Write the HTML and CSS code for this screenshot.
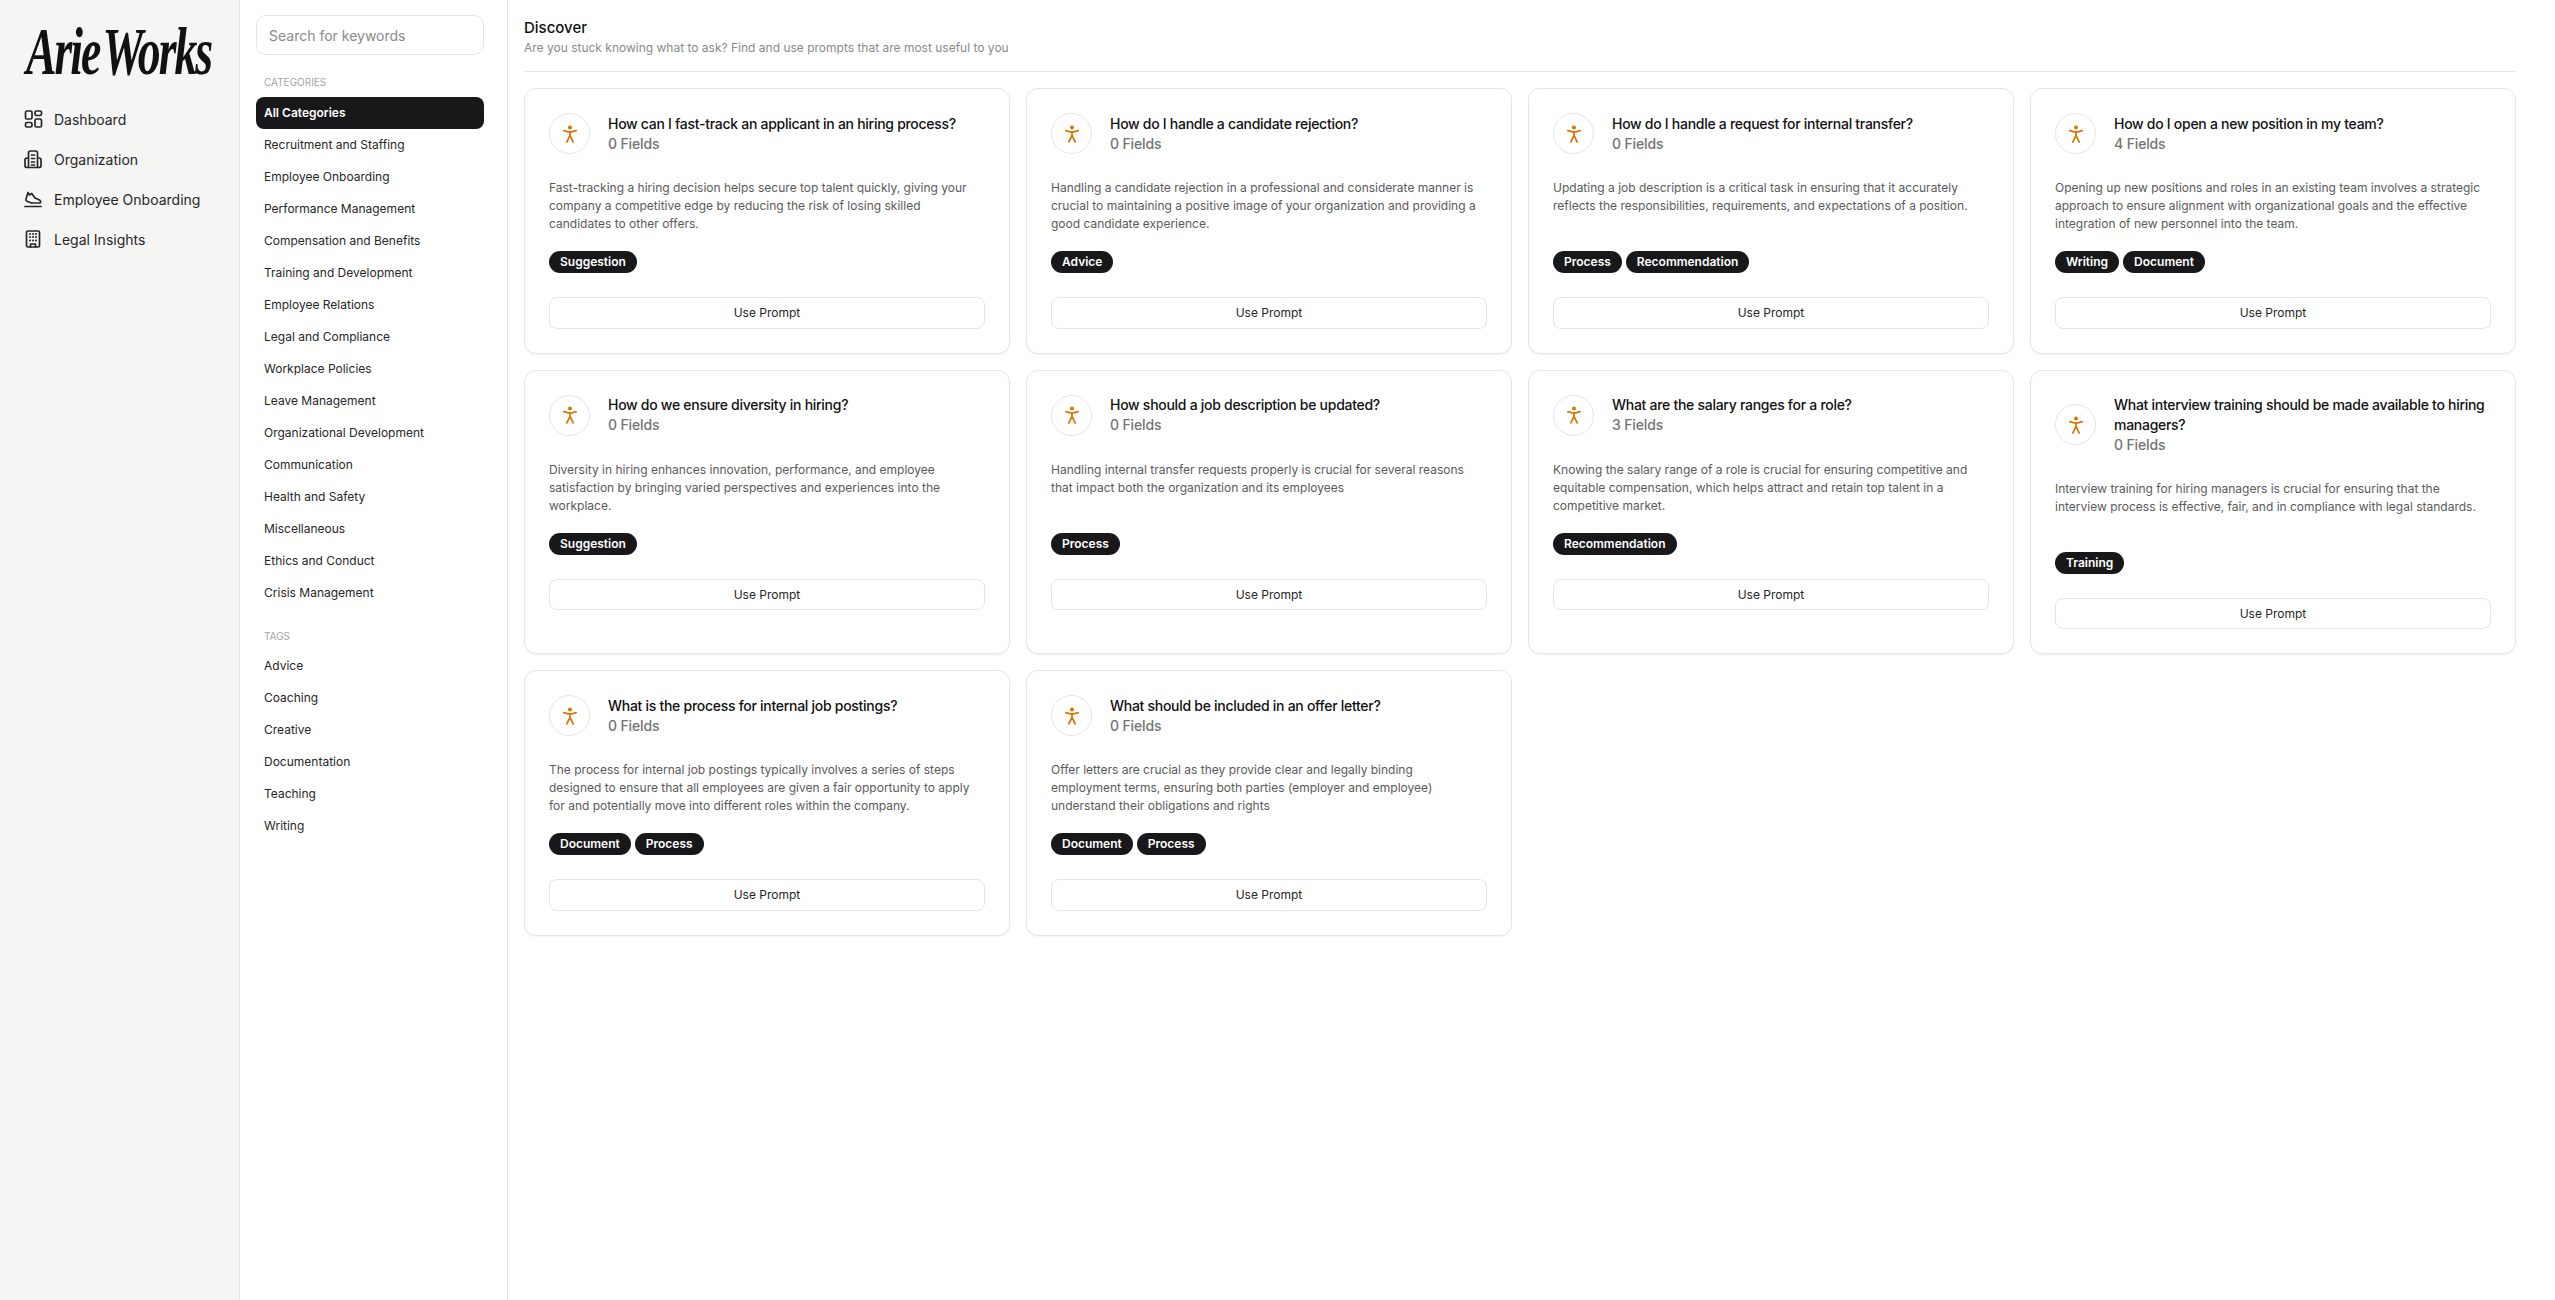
FILE: index.html
```html
<!DOCTYPE html>
<html lang="en">
<head>
    <meta charset="UTF-8">
    <meta name="viewport" content="width=device-width, initial-scale=1.0">
    <title>Arie Works - Discover</title>
    <link rel="stylesheet" href="styles.css">
</head>
<body>
    <svg class="icon-defs" width="0" height="0">
        <symbol id="person" viewBox="0 0 16 20">
            <circle cx="8" cy="2.6" r="2.3" fill="currentColor"/>
            <path d="M1 6.2 L6 7.6 H10 L15 6.2 M8 7.6 V11.6 M8 11.6 L4.4 19 M8 11.6 L11.6 19" fill="none" stroke="currentColor" stroke-width="2" stroke-linecap="round" stroke-linejoin="round"/>
        </symbol>
    </svg>
    <div class="app">
        <aside class="sidebar">
            <div class="logo"><span class="logo-text">Arie Works</span></div>
            <nav class="nav">
                <a class="nav-item">
                    <svg viewBox="0 0 24 24"><rect x="4.5" y="4" width="6.5" height="8" rx="1.5"/><rect x="4.5" y="15.5" width="6.5" height="4.5" rx="1.5"/><rect x="14" y="12" width="6.5" height="8" rx="1.5"/><rect x="14" y="4" width="6.5" height="4.5" rx="1.5"/></svg>
                    Dashboard
                </a>
                <a class="nav-item">
                    <svg viewBox="0 0 24 24"><path d="M7.5 20.5V6a2 2 0 0 1 2-2h5a2 2 0 0 1 2 2v14.5M7.5 11H6a2 2 0 0 0-2 2v5.500a2 2 0 0 0 2 2h12a2 2 0 0 0 2-2V13a2 2 0 0 0-2-2h-1.500M10.500 8h3M10.500 11.500h3M10.500 15h3M10.500 18h3"/></svg>
                    Organization
                </a>
                <a class="nav-item">
                    <svg viewBox="0 0 24 24"><path d="M4 19.500h16M7 5.500 5 12c-.3 1 .2 1.800 1 2.200l3 1.300c1 .4 2 .5 3 .5h6.500c1 0 1.500-.7 1.200-1.500-.4-1.200-1.400-1.900-2.700-2.200L14 11 10.800 6.500 8.500 8 7 5.500z"/></svg>
                    Employee Onboarding
                </a>
                <a class="nav-item">
                    <svg viewBox="0 0 24 24"><rect x="5.500" y="4" width="13" height="16" rx="1.500"/><path d="M9.500 20v-3h5v3"/><path class="dots" d="M9 7h.01M12 7h.01M15 7h.01M9 10h.01M12 10h.01M15 10h.01M9 13.500h.01M12 13.500h.01M15 13.500h.01"/></svg>
                    Legal Insights
                </a>
            </nav>
        </aside>

        <aside class="filters">
            <input class="search" type="text" placeholder="Search for keywords">
            <h5 class="filter-label">CATEGORIES</h5>
            <ul class="filter-list">
                <li class="active">All Categories</li>
                <li>Recruitment and Staffing</li>
                <li>Employee Onboarding</li>
                <li>Performance Management</li>
                <li>Compensation and Benefits</li>
                <li>Training and Development</li>
                <li>Employee Relations</li>
                <li>Legal and Compliance</li>
                <li>Workplace Policies</li>
                <li>Leave Management</li>
                <li>Organizational Development</li>
                <li>Communication</li>
                <li>Health and Safety</li>
                <li>Miscellaneous</li>
                <li>Ethics and Conduct</li>
                <li>Crisis Management</li>
            </ul>
            <h5 class="filter-label tags-label">TAGS</h5>
            <ul class="filter-list">
                <li>Advice</li>
                <li>Coaching</li>
                <li>Creative</li>
                <li>Documentation</li>
                <li>Teaching</li>
                <li>Writing</li>
            </ul>
        </aside>

        <main class="main">
            <header class="page-head">
                <h1>Discover</h1>
                <p>Are you stuck knowing what to ask? Find and use prompts that are most useful to you</p>
            </header>
            <div class="grid">
                <article class="card">
                    <div class="card-head">
                        <span class="avatar"><svg><use href="#person"/></svg></span>
                        <div><h3>How can I fast-track an applicant in an hiring process?</h3><span class="fields">0 Fields</span></div>
                    </div>
                    <p class="desc">Fast-tracking a hiring decision helps secure top talent quickly, giving your company a competitive edge by reducing the risk of losing skilled candidates to other offers.</p>
                    <div class="tags"><span class="tag">Suggestion</span></div>
                    <button class="use-btn">Use Prompt</button>
                </article>
                <article class="card">
                    <div class="card-head">
                        <span class="avatar"><svg><use href="#person"/></svg></span>
                        <div><h3>How do I handle a candidate rejection?</h3><span class="fields">0 Fields</span></div>
                    </div>
                    <p class="desc">Handling a candidate rejection in a professional and considerate manner is crucial to maintaining a positive image of your organization and providing a good candidate experience.</p>
                    <div class="tags"><span class="tag">Advice</span></div>
                    <button class="use-btn">Use Prompt</button>
                </article>
                <article class="card">
                    <div class="card-head">
                        <span class="avatar"><svg><use href="#person"/></svg></span>
                        <div><h3>How do I handle a request for internal transfer?</h3><span class="fields">0 Fields</span></div>
                    </div>
                    <p class="desc">Updating a job description is a critical task in ensuring that it accurately reflects the responsibilities, requirements, and expectations of a position.</p>
                    <div class="tags"><span class="tag">Process</span><span class="tag">Recommendation</span></div>
                    <button class="use-btn">Use Prompt</button>
                </article>
                <article class="card">
                    <div class="card-head">
                        <span class="avatar"><svg><use href="#person"/></svg></span>
                        <div><h3>How do I open a new position in my team?</h3><span class="fields">4 Fields</span></div>
                    </div>
                    <p class="desc">Opening up new positions and roles in an existing team involves a strategic approach to ensure alignment with organizational goals and the effective integration of new personnel into the team.</p>
                    <div class="tags"><span class="tag">Writing</span><span class="tag">Document</span></div>
                    <button class="use-btn">Use Prompt</button>
                </article>
                <article class="card">
                    <div class="card-head">
                        <span class="avatar"><svg><use href="#person"/></svg></span>
                        <div><h3>How do we ensure diversity in hiring?</h3><span class="fields">0 Fields</span></div>
                    </div>
                    <p class="desc">Diversity in hiring enhances innovation, performance, and employee satisfaction by bringing varied perspectives and experiences into the workplace.</p>
                    <div class="tags"><span class="tag">Suggestion</span></div>
                    <button class="use-btn">Use Prompt</button>
                </article>
                <article class="card">
                    <div class="card-head">
                        <span class="avatar"><svg><use href="#person"/></svg></span>
                        <div><h3>How should a job description be updated?</h3><span class="fields">0 Fields</span></div>
                    </div>
                    <p class="desc">Handling internal transfer requests properly is crucial for several reasons that impact both the organization and its employees</p>
                    <div class="tags"><span class="tag">Process</span></div>
                    <button class="use-btn">Use Prompt</button>
                </article>
                <article class="card">
                    <div class="card-head">
                        <span class="avatar"><svg><use href="#person"/></svg></span>
                        <div><h3>What are the salary ranges for a role?</h3><span class="fields">3 Fields</span></div>
                    </div>
                    <p class="desc">Knowing the salary range of a role is crucial for ensuring competitive and equitable compensation, which helps attract and retain top talent in a competitive market.</p>
                    <div class="tags"><span class="tag">Recommendation</span></div>
                    <button class="use-btn">Use Prompt</button>
                </article>
                <article class="card">
                    <div class="card-head">
                        <span class="avatar"><svg><use href="#person"/></svg></span>
                        <div><h3>What interview training should be made available to hiring managers?</h3><span class="fields">0 Fields</span></div>
                    </div>
                    <p class="desc">Interview training for hiring managers is crucial for ensuring that the interview process is effective, fair, and in compliance with legal standards.</p>
                    <div class="tags"><span class="tag">Training</span></div>
                    <button class="use-btn">Use Prompt</button>
                </article>
                <article class="card">
                    <div class="card-head">
                        <span class="avatar"><svg><use href="#person"/></svg></span>
                        <div><h3>What is the process for internal job postings?</h3><span class="fields">0 Fields</span></div>
                    </div>
                    <p class="desc">The process for internal job postings typically involves a series of steps designed to ensure that all employees are given a fair opportunity to apply for and potentially move into different roles within the company.</p>
                    <div class="tags"><span class="tag">Document</span><span class="tag">Process</span></div>
                    <button class="use-btn">Use Prompt</button>
                </article>
                <article class="card">
                    <div class="card-head">
                        <span class="avatar"><svg><use href="#person"/></svg></span>
                        <div><h3>What should be included in an offer letter?</h3><span class="fields">0 Fields</span></div>
                    </div>
                    <p class="desc">Offer letters are crucial as they provide clear and legally binding employment terms, ensuring both parties (employer and employee) understand their obligations and rights</p>
                    <div class="tags"><span class="tag">Document</span><span class="tag">Process</span></div>
                    <button class="use-btn">Use Prompt</button>
                </article>
            </div>
        </main>
    </div>
</body>
</html>
```

FILE: styles.css
```css
* {
    box-sizing: border-box;
}
body {
    margin: 0;
    font-family: Inter, "Noto Sans", sans-serif;
    color: #171717;
    background-color: #fff;
}
.icon-defs {
    display: block;
    height: 0;
}
.app {
    display: flex;
    min-height: 100vh;
}

/* left nav */
.sidebar {
    flex: 0 0 240px;
    min-width: 0;
    background-color: #f5f5f4;
    border-right: 1px solid #e5e5e5;
}
.logo {
    height: 99px;
    padding: 17px 0 0 26px;
    overflow: hidden;
}
.logo-text {
    display: block;
    width: 190px;
    font-family: "Liberation Serif", serif;
    font-style: italic;
    font-weight: 700;
    font-size: 68px;
    line-height: 68px;
    letter-spacing: -3px;
    word-spacing: -8px;
    color: #111;
    white-space: nowrap;
    transform: scaleX(0.673);
    transform-origin: left top;
}
.nav-item {
    display: flex;
    align-items: center;
    height: 40px;
    padding-left: 21px;
    gap: 9px;
    font-size: 14px;
    color: #262626;
}
.nav-item svg {
    width: 24px;
    height: 24px;
    fill: none;
    stroke: #262626;
    stroke-width: 1.7;
    stroke-linecap: round;
    stroke-linejoin: round;
}
.nav-item svg .dots {
    stroke-width: 2;
}

/* filter column */
.filters {
    flex: 0 0 268px;
    min-width: 0;
    padding: 15px 23px 0 16px;
    border-right: 1px solid #e5e5e5;
}
.search {
    display: block;
    width: 100%;
    height: 40px;
    padding: 0 12px;
    border: 1px solid #e5e5e5;
    border-radius: 10px;
    font-family: inherit;
    font-size: 14px;
    outline: none;
}
.search::placeholder {
    color: #8a8a8a;
}
.filter-label {
    margin: 20px 0 0;
    padding-left: 8px;
    height: 22px;
    font-size: 10px;
    line-height: 14px;
    font-weight: 400;
    color: #a3a3a3;
}
.tags-label {
    height: 21px;
}
.filter-list {
    list-style: none;
    margin: 0;
    padding: 0;
}
.filter-list li {
    height: 32px;
    padding-left: 8px;
    border-radius: 8px;
    font-size: 12px;
    line-height: 32px;
    color: #262626;
}
.filter-list li.active {
    background-color: #18181b;
    color: #fff;
    font-weight: 600;
}

/* main */
.main {
    flex: 1;
    min-width: 0;
    padding: 18px 39px 16px 16px;
}
.page-head {
    height: 54px;
    border-bottom: 1px solid #e5e5e5;
}
.page-head h1 {
    margin: 0;
    font-size: 15px;
    line-height: 20px;
    font-weight: 500;
    color: #111;
}
.page-head p {
    margin: 0;
    font-size: 12px;
    line-height: 20px;
    color: #8a8a8a;
}
.grid {
    display: grid;
    grid-template-columns: repeat(4, 1fr);
    gap: 16px;
    margin-top: 16px;
}
.card {
    padding: 24px;
    border: 1px solid #e5e5e5;
    border-radius: 12px;
    box-shadow: 0 1px 2px rgba(0, 0, 0, 0.05);
    background-color: #fff;
}
.card-head {
    display: flex;
    align-items: center;
    gap: 18px;
}
.avatar {
    flex: 0 0 41px;
    display: flex;
    align-items: center;
    justify-content: center;
    height: 41px;
    border: 1px solid #e5e5e5;
    border-radius: 50%;
    color: #d97706;
}
.avatar svg {
    width: 14px;
    height: 18px;
}
.card-head h3 {
    margin: 0;
    font-size: 14px;
    line-height: 20px;
    font-weight: 500;
    letter-spacing: -0.02em;
    color: #111;
}
.fields {
    display: block;
    font-size: 14px;
    line-height: 20px;
    font-weight: 500;
    letter-spacing: -0.01em;
    color: #737373;
}
.desc {
    margin: 25px 0 18px;
    padding-right: 4px;
    min-height: 54px;
    font-size: 12px;
    line-height: 18px;
    color: #5a5a5a;
}
.tags {
    display: flex;
    gap: 4px;
    margin-bottom: 24px;
}
.tag {
    height: 22px;
    padding: 0 11px;
    border-radius: 11px;
    background-color: #18181b;
    color: #fff;
    font-size: 12px;
    line-height: 22px;
    font-weight: 600;
}
.use-btn {
    display: block;
    width: 100%;
    height: 31.5px;
    border: 1px solid #e5e5e5;
    border-radius: 8px;
    background-color: #fff;
    font-family: inherit;
    font-size: 12px;
    color: #262626;
}
```
